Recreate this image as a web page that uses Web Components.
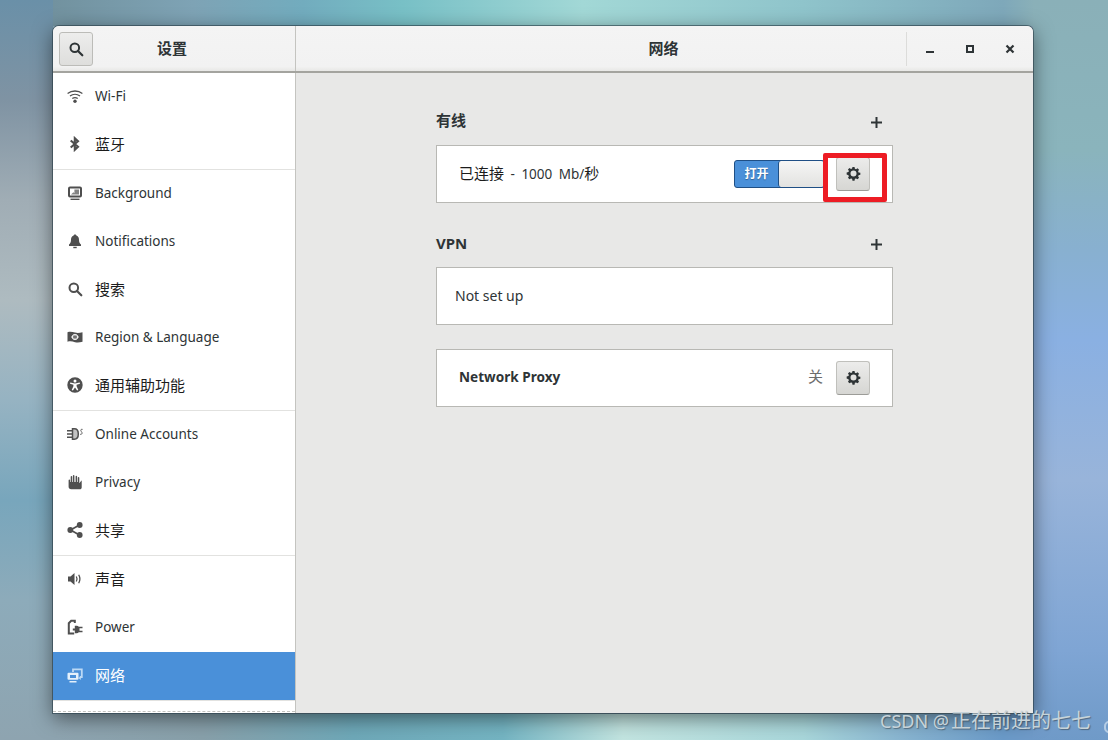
<!DOCTYPE html>
<html lang="zh">
<head>
<meta charset="utf-8">
<title>设置</title>
<style>
html, body { margin: 0; height: 100%; }
body {
    font-family: "Noto Sans", "Noto Sans CJK SC", sans-serif;
    overflow: hidden;
}
</style>
</head>
<body>
<desktop-bg>
    <settings-window>
        <window-header slot="header"></window-header>
        <side-nav slot="nav"></side-nav>
        <network-panel slot="panel"></network-panel>
    </settings-window>
</desktop-bg>

<script>
const ICONS = {
    search: '<circle cx="6.8" cy="6.8" r="4.3" fill="none" stroke="currentColor" stroke-width="2"/><path d="M10 10l4.3 4.3" stroke="currentColor" stroke-width="2.2" stroke-linecap="round"/>',
    wifi: '<path d="M.6 5.400C4.800 2.200 11.200 2.200 15.400 5.400" fill="none" stroke="currentColor" stroke-width="1.300"/><path d="M3 8.100c2.900-2.200 7.100-2.200 10 0" fill="none" stroke="currentColor" stroke-width="1.300"/><path d="M5.300 10.600c1.600-1.200 3.800-1.200 5.400 0" fill="none" stroke="currentColor" stroke-width="1.300"/><circle cx="8" cy="13.300" r="1.700" fill="currentColor"/>',
    bluetooth: '<path d="M3.700 4.500L11 10.800 7.800 13.800V2.200L11 5.200 3.700 11.500" fill="none" stroke="currentColor" stroke-width="2.100"/>',
    background: '<path d="M3 1.500h10a2 2 0 0 1 2 2v7a2 2 0 0 1-2 2H3a2 2 0 0 1-2-2v-7a2 2 0 0 1 2-2zM3 3.500v7h10v-7z" fill="currentColor" fill-rule="evenodd"/><path d="M4 9.600l2.400-2.400 1 1V4.600H12v5z" fill="currentColor" opacity=".7"/><rect x="3.500" y="13.600" width="9" height="1.400" fill="currentColor"/>',
    bell: '<path d="M8 1.500c.8 0 1.300.5 1.400 1.100C11.400 3.200 12 5 12 7c0 2.400.8 3.600 2 4.500V13H2v-1.500C3.200 10.600 4 9.400 4 7c0-2 .6-3.800 2.600-4.400C6.700 2 7.200 1.500 8 1.500z" fill="currentColor"/><rect x="6.300" y="13.800" width="3.400" height="1.400" fill="currentColor"/>',
    region: '<path d="M.5 3.200c3-1 5-.2 7.500.4 2.500.6 4.500.4 7.500-.4v9.600c-3 .8-5 1-7.500.4-2.500-.6-4.500-1.400-7.500-.4z" fill="currentColor"/><circle cx="8" cy="8" r="2.700" fill="none" stroke="#fff" stroke-width=".9"/><path d="M4.300 8c1-1.700 6.400-1.700 7.400 0-1 1.700-6.400 1.700-7.400 0z" fill="none" stroke="#fff" stroke-width=".7"/>',
    access: '<path d="M8 .3a7.700 7.700 0 1 0 0 15.400A7.700 7.700 0 0 0 8 .3zm0 2.300a1.500 1.500 0 1 1 0 3 1.500 1.500 0 0 1 0-3zM3.300 5.600L8 6.500l4.700-.9.3 1.200-3.400 1v1.500l1.700 3.800-1.200.5L8 10.600l-2.100 3-1.200-.5 1.700-3.800V7.800l-3.400-1z" fill="currentColor" fill-rule="evenodd"/>',
    accounts: '<path d="M0 4.800h5M0 8h5M0 11.200h5" stroke="currentColor" stroke-width="1.500" fill="none"/><path d="M5.500 2.800h1.800c2.700 0 4 2.300 4 5.200s-1.300 5.200-4 5.200H5.500z" fill="currentColor" fill-opacity=".35" stroke="currentColor" stroke-width="1.500"/><path d="M15.600 3.400c-1.400-.4-2.100.4-1.700 1.400.4 1 1.400 1.500 1.100 2.700-.2.800-1 1-2 .8" stroke="currentColor" stroke-width=".9" fill="none"/>',
    privacy: '<path d="M1 6.200c0-1 1.500-1 1.500 0V8h.6V2.800c0-1 1.500-1 1.500 0V8h.7V1.800c0-1 1.500-1 1.500 0V8H8V2.500c0-1 1.500-1 1.500 0V8h.7V3.800c0-1 1.500-1 1.500 0v5c0 .3.300.3.500 0 .6-.8 1.300-2.200 1.900-2.300v7c0 1-.8 1.800-1.800 1.800H3.500C2 15.300 1 14.200 1 12.800z" fill="currentColor" transform="translate(.6 0)"/>',
    share: '<path d="M3.500 8L12.500 3M3.500 8l9 5" stroke="currentColor" stroke-width="1.700" fill="none"/><circle cx="3.300" cy="8" r="2.900" fill="currentColor"/><circle cx="12.700" cy="3" r="2.900" fill="currentColor"/><circle cx="12.700" cy="13" r="2.900" fill="currentColor"/>',
    sound: '<path d="M1 5.500h2.500L7.500 2v12l-4-3.500H1z" fill="currentColor"/><path d="M9.300 5.500c.9 1.500.9 3.500 0 5" stroke="currentColor" stroke-width="1.300" fill="none"/><path d="M11.700 3.800c1.500 2.600 1.500 5.800 0 8.400" stroke="currentColor" stroke-width="1.300" fill="none"/>',
    power: '<path d="M7.800 4V1.800H4.200L1.800 4.200V14.400H7.200" fill="none" stroke="currentColor" stroke-width="2"/><path d="M9.800 6.800a3.300 3.300 0 0 1 2 1h3.700v1.500h-3v2.400h3v1.500h-3.700a3.300 3.300 0 0 1-2 1H7.800v-2.700H5.800V9.500h2V6.800z" fill="currentColor"/>',
    network: '<path d="M6 5V2.300h8.800V10h-2" fill="none" stroke="currentColor" stroke-width="1.800"/><path d="M13.800 9.200l-2.400 1.900 2.400 1.900z" fill="currentColor"/><path d="M1.500 5.800h9a1 1 0 0 1 1 1v5a1 1 0 0 1-1 1h-9a1 1 0 0 1-1-1v-5a1 1 0 0 1 1-1zM3 7.900v3h6v-3z" fill="#e4f0fb" fill-rule="evenodd"/><rect x="2.500" y="14" width="7" height="1.500" fill="#e4f0fb"/>',
    gear: '<path d="M6.900 1h2.200l.4 1.900 1.200.5 1.600-1 1.600 1.600-1 1.600.5 1.200 1.900.4v2.200l-1.900.4-.5 1.200 1 1.600-1.600 1.600-1.600-1-1.200.5-.4 1.900H6.900l-.4-1.900-1.200-.5-1.600 1-1.600-1.600 1-1.600-.5-1.200L.7 9.100V6.900l1.900-.4.5-1.200-1-1.600 1.600-1.600 1.600 1 1.200-.5zM8 4.800a3.200 3.200 0 1 0 0 6.400 3.200 3.200 0 0 0 0-6.400z" fill="currentColor" fill-rule="evenodd"/>',
};

function icon(name, size) {
    return `<svg width="${size}" height="${size}" viewBox="0 0 16 16" aria-hidden="true">${ICONS[name]}</svg>`;
}

class DesktopBg extends HTMLElement {
    constructor() {
        super();
        this.attachShadow({mode: 'open'});
        this.shadowRoot.innerHTML = `
            <style>
            :host {
                display: block;
                position: relative;
                width: 1108px;
                height: 740px;
                box-sizing: border-box;
                padding: 26px 75px 27px 53px;
                overflow: hidden;
                background:
                    linear-gradient(180deg, #6a90a8 0, #7f93a3 100px, #a0adb5 200px, #aebbc0 300px, #96b3c2 400px, #78a6bc 500px, #8dabba 600px, #8ea4b0 740px) 0 0 / 53px 100% no-repeat,
                    linear-gradient(180deg, #8ab0b8 0, #8ab4bc 150px, #88b0d0 250px, #8ab0e2 340px, #98b4da 480px, #7fa5d4 650px, #6f9ac8 740px) 100% 0 / 75px 100% no-repeat,
                    linear-gradient(90deg, #72929f 0, #7ea3b5 140px, #72acbe 250px, #78c0c6 350px, #a2d8d6 530px, #8fc4cb 750px, #7ea8ba 950px, #8ab0b8 981px) 53px 0 / 981px 26px no-repeat,
                    linear-gradient(90deg, #8ea4b0 0, #88a0aa 150px, #6ea8b8 300px, #74b4c2 450px, #c2e4e0 570px, #a8d6da 750px, #88b4d0 850px, #6a9ac8 950px, #6f9ac8 981px) 53px 100% / 981px 26px no-repeat,
                    #8aa8b8;
            }
            .mark {
                position: absolute;
                left: 880px;
                top: 709px;
                font-size: 18px;
                line-height: 24px;
                color: #c6d3d9;
                text-shadow: 1px 1px 1px rgba(50,60,70,.55);
                white-space: nowrap;
            }
            .mark span { font-size: 20px; margin-left: 2px; }
            .edge {
                position: absolute;
                left: 1104px;
                top: 721px;
                width: 10px;
                height: 12px;
                box-sizing: border-box;
                border: 2px solid rgba(210,225,240,.7);
                border-radius: 5px;
            }
            </style>
            <slot></slot>
            <div class="mark">CSDN @<span>正在前进的七七</span></div>
            <div class="edge"></div>
        `;
    }
}

class SettingsWindow extends HTMLElement {
    constructor() {
        super();
        this.attachShadow({mode: 'open'});
        this.shadowRoot.innerHTML = `
            <style>
            :host {
                display: grid;
                grid-template-columns: 243px 1fr;
                grid-template-rows: 47px 1fr;
                height: 100%;
                background: #e8e8e7;
                border-radius: 6px 6px 0 0;
                box-shadow: 0 0 0 1px rgba(40,60,70,.6), 0 5px 20px rgba(0,0,0,.5);
                overflow: hidden;
            }
            ::slotted([slot=header]) { grid-column: 1 / 3; }
            </style>
            <slot name="header"></slot>
            <slot name="nav"></slot>
            <slot name="panel"></slot>
        `;
    }
}

class WindowHeader extends HTMLElement {
    constructor() {
        super();
        this.attachShadow({mode: 'open'});
        this.shadowRoot.innerHTML = `
            <style>
            :host {
                display: grid;
                grid-template-columns: 243px 1fr;
                background: linear-gradient(#f4f4f4, #f2f2f2 90%, #e8e8e6);
                border-bottom: 2px solid #a4a49f;
                box-sizing: border-box;
                height: 47px;
                color: #2e3436;
            }
            .left, .right {
                display: flex;
                align-items: center;
                position: relative;
                font-size: 15px;
                font-weight: 700;
            }
            .left { padding-left: 6px; border-right: 1px solid #c4c4c0; }
            .search {
                width: 34px;
                height: 34px;
                box-sizing: border-box;
                display: flex;
                align-items: center;
                justify-content: center;
                border: 1px solid #bcbcb8;
                border-radius: 3px;
                background: linear-gradient(#ededec, #dededc);
            }
            .title { flex: 1; text-align: center; margin-bottom: 3px; }
            .left .title { padding-right: 44px; }
            .right .title { padding-right: 2px; }
            .buttons {
                display: flex;
                position: absolute;
                right: 3px;
                top: 6px;
                height: 34px;
                border-left: 1px solid #dcdcda;
                padding-left: 3px;
            }
            .buttons span {
                width: 40px;
                height: 34px;
                display: flex;
                align-items: center;
                justify-content: center;
            }
            </style>
            <div class="left">
                <div class="search">${icon('search', 16)}</div>
                <div class="title">设置</div>
            </div>
            <div class="right">
                <div class="title">网络</div>
                <div class="buttons">
                    <span><svg width="10" height="10" viewBox="0 0 10 10"><rect x="1" y="7" width="8" height="2" fill="currentColor"/></svg></span>
                    <span><svg width="10" height="10" viewBox="0 0 10 10"><path d="M1 1h8v8H1zM3 3v4h4V3z" fill="currentColor" fill-rule="evenodd"/></svg></span>
                    <span><svg width="10" height="10" viewBox="0 0 10 10"><path d="M1.500 1.500l7 7M8.500 1.500l-7 7" stroke="currentColor" stroke-width="2.200"/></svg></span>
                </div>
            </div>
        `;
    }
}

class NavItem extends HTMLElement {
    constructor() {
        super();
        this.attachShadow({mode: 'open'});
        this.shadowRoot.innerHTML = `
            <style>
            :host {
                display: flex;
                align-items: center;
                height: 48px;
                box-sizing: border-box;
                padding: 0 0 2px 14px;
                gap: 12px;
                font-size: 13.5px;
                color: #2e3436;
            }
            :host([zh]) { font-size: 15px; color: #1c1c1c; }
            :host([zh]) .txt { margin-bottom: 2px; }
            :host([selected]) { background: #4a90d9; color: #fff; }
            .ico { width: 16px; height: 16px; display: flex; color: #4f4f4f; }
            :host([selected]) .ico { color: #bcd9f5; }
            </style>
            <span class="ico">${icon(this.getAttribute('icon'), 16)}</span>
            <span class="txt"><slot></slot></span>
        `;
    }
}

class SideNav extends HTMLElement {
    constructor() {
        super();
        this.attachShadow({mode: 'open'});
        const groups = [
            [['wifi', 'Wi-Fi'], ['bluetooth', '蓝牙']],
            [['background', 'Background'], ['bell', 'Notifications'], ['search', '搜索'], ['region', 'Region &amp; Language'], ['access', '通用辅助功能']],
            [['accounts', 'Online Accounts'], ['privacy', 'Privacy'], ['share', '共享']],
            [['sound', '声音'], ['power', 'Power'], ['network', '网络']],
        ];
        const html = groups.map(g => '<div class="group">' + g.map(([ic, label]) => {
            const zh = /[\u4e00-\u9fff]/.test(label) ? ' zh' : '';
            const selected = label === '网络' ? ' selected' : '';
            return `<nav-item icon="${ic}"${zh}${selected}>${label}</nav-item>`;
        }).join('') + '</div>').join('');
        this.shadowRoot.innerHTML = `
            <style>
            :host {
                display: block;
                background: #fff;
                border-right: 1px solid #c4c4c0;
                overflow: hidden;
                position: relative;
            }
            .group { border-bottom: 1px solid #e2e2e0; }
            .group:last-child { border-bottom: none; }
            .dash {
                position: absolute;
                left: 0;
                right: 0;
                bottom: 1px;
                border-top: 1px dashed #c4c4c0;
            }
            </style>
            ${html}
            <div class="dash"></div>
        `;
    }
}

class PanelSection extends HTMLElement {
    constructor() {
        super();
        this.attachShadow({mode: 'open'});
        const heading = this.getAttribute('heading');
        this.shadowRoot.innerHTML = `
            <style>
            :host { display: block; }
            .head {
                display: flex;
                justify-content: space-between;
                align-items: center;
                height: 24px;
                margin-bottom: 12px;
                font-size: 15px;
                font-weight: 700;
                color: #2e3436;
            }
            :host([zh]) .label { margin-bottom: 4px; }
            .plus { width: 11px; height: 11px; margin: 2px 11px 0 0; display: flex; }
            </style>
            <div class="head">
                <span class="label">${heading}</span>
                <svg class="plus" viewBox="0 0 11 11"><path d="M0 5.500h11M5.500 0v11" stroke="#2e3436" stroke-width="2"/></svg>
            </div>
            <slot></slot>
        `;
    }
}

class PanelCard extends HTMLElement {
    constructor() {
        super();
        this.attachShadow({mode: 'open'});
        this.shadowRoot.innerHTML = `
            <style>
            :host {
                display: flex;
                align-items: center;
                position: relative;
                height: 58px;
                box-sizing: border-box;
                border: 1px solid #b8b8b4;
                background: #fff;
                padding: 0 22px;
                font-size: 14px;
                color: #2e3436;
            }
            </style>
            <slot></slot>
        `;
    }
}

class GearButton extends HTMLElement {
    constructor() {
        super();
        this.attachShadow({mode: 'open'});
        this.shadowRoot.innerHTML = `
            <style>
            :host {
                display: flex;
                align-items: center;
                justify-content: center;
                width: 34px;
                height: 34px;
                box-sizing: border-box;
                border: 1px solid #c0c0bc;
                border-bottom-color: #9c9c98;
                border-radius: 3px;
                background: linear-gradient(#ececeb, #d6d6d3);
                color: #2e3436;
            }
            </style>
            ${icon('gear', 15)}
        `;
    }
}

class OnSwitch extends HTMLElement {
    constructor() {
        super();
        this.attachShadow({mode: 'open'});
        this.shadowRoot.innerHTML = `
            <style>
            :host {
                display: flex;
                width: 91px;
                height: 28px;
                box-sizing: border-box;
                border: 1px solid #1f4f85;
                border-radius: 3px;
                background: #4a90d9;
                overflow: hidden;
            }
            .on {
                width: 43px;
                text-align: center;
                color: #fff;
                font-size: 12px;
                font-weight: 700;
                line-height: 26px;
                text-shadow: 0 1px 1px rgba(0,0,0,.3);
            }
            .knob {
                flex: 1;
                border-left: 1px solid #1f4f85;
                border-radius: 3px;
                background: linear-gradient(#f6f6f5, #e2e2e0);
            }
            </style>
            <div class="on">打开</div>
            <div class="knob"></div>
        `;
    }
}

class NetworkPanel extends HTMLElement {
    constructor() {
        super();
        this.attachShadow({mode: 'open'});
        this.shadowRoot.innerHTML = `
            <style>
            :host {
                display: flex;
                flex-direction: column;
                width: 457px;
                margin-left: 140px;
                padding-top: 36px;
            }
            .wired { margin-bottom: 28px; }
            .vpn { margin-bottom: 24px; }
            .grow { flex: 1; }
            .speed { word-spacing: 3px; font-size: 13.5px; margin-bottom: 4px; }
            .zh { font-size: 15px; color: #1c1c1c; }
            .nset { margin: 0 0 2px -4px; }
            .name { font-weight: 700; font-size: 13.6px; margin-bottom: 3px; }
            .off { color: #6d6d6d; margin: 0 13px 5px 0; font-size: 15px; }
            on-switch { margin-right: 11px; margin-top: -1px; }
            gear-button { margin-top: -1px; }
            .mark {
                position: absolute;
                left: 386px;
                top: 7px;
                width: 64px;
                height: 49px;
                box-sizing: border-box;
                border: 5px solid #ed1c24;
                border-radius: 2px;
            }
            </style>
            <panel-section class="wired" heading="有线" zh>
                <panel-card>
                    <span class="speed"><span class="zh">已连接</span> - 1000 Mb/<span class="zh">秒</span></span>
                    <span class="grow"></span>
                    <on-switch></on-switch>
                    <gear-button></gear-button>
                    <div class="mark"></div>
                </panel-card>
            </panel-section>
            <panel-section class="vpn" heading="VPN">
                <panel-card><span class="nset">Not set up</span></panel-card>
            </panel-section>
            <panel-card>
                <span class="name">Network Proxy</span>
                <span class="grow"></span>
                <span class="off">关</span>
                <gear-button></gear-button>
            </panel-card>
        `;
    }
}

customElements.define('nav-item', NavItem);
customElements.define('side-nav', SideNav);
customElements.define('window-header', WindowHeader);
customElements.define('settings-window', SettingsWindow);
customElements.define('desktop-bg', DesktopBg);
customElements.define('panel-section', PanelSection);
customElements.define('panel-card', PanelCard);
customElements.define('gear-button', GearButton);
customElements.define('on-switch', OnSwitch);
customElements.define('network-panel', NetworkPanel);
</script>
</body>
</html>
